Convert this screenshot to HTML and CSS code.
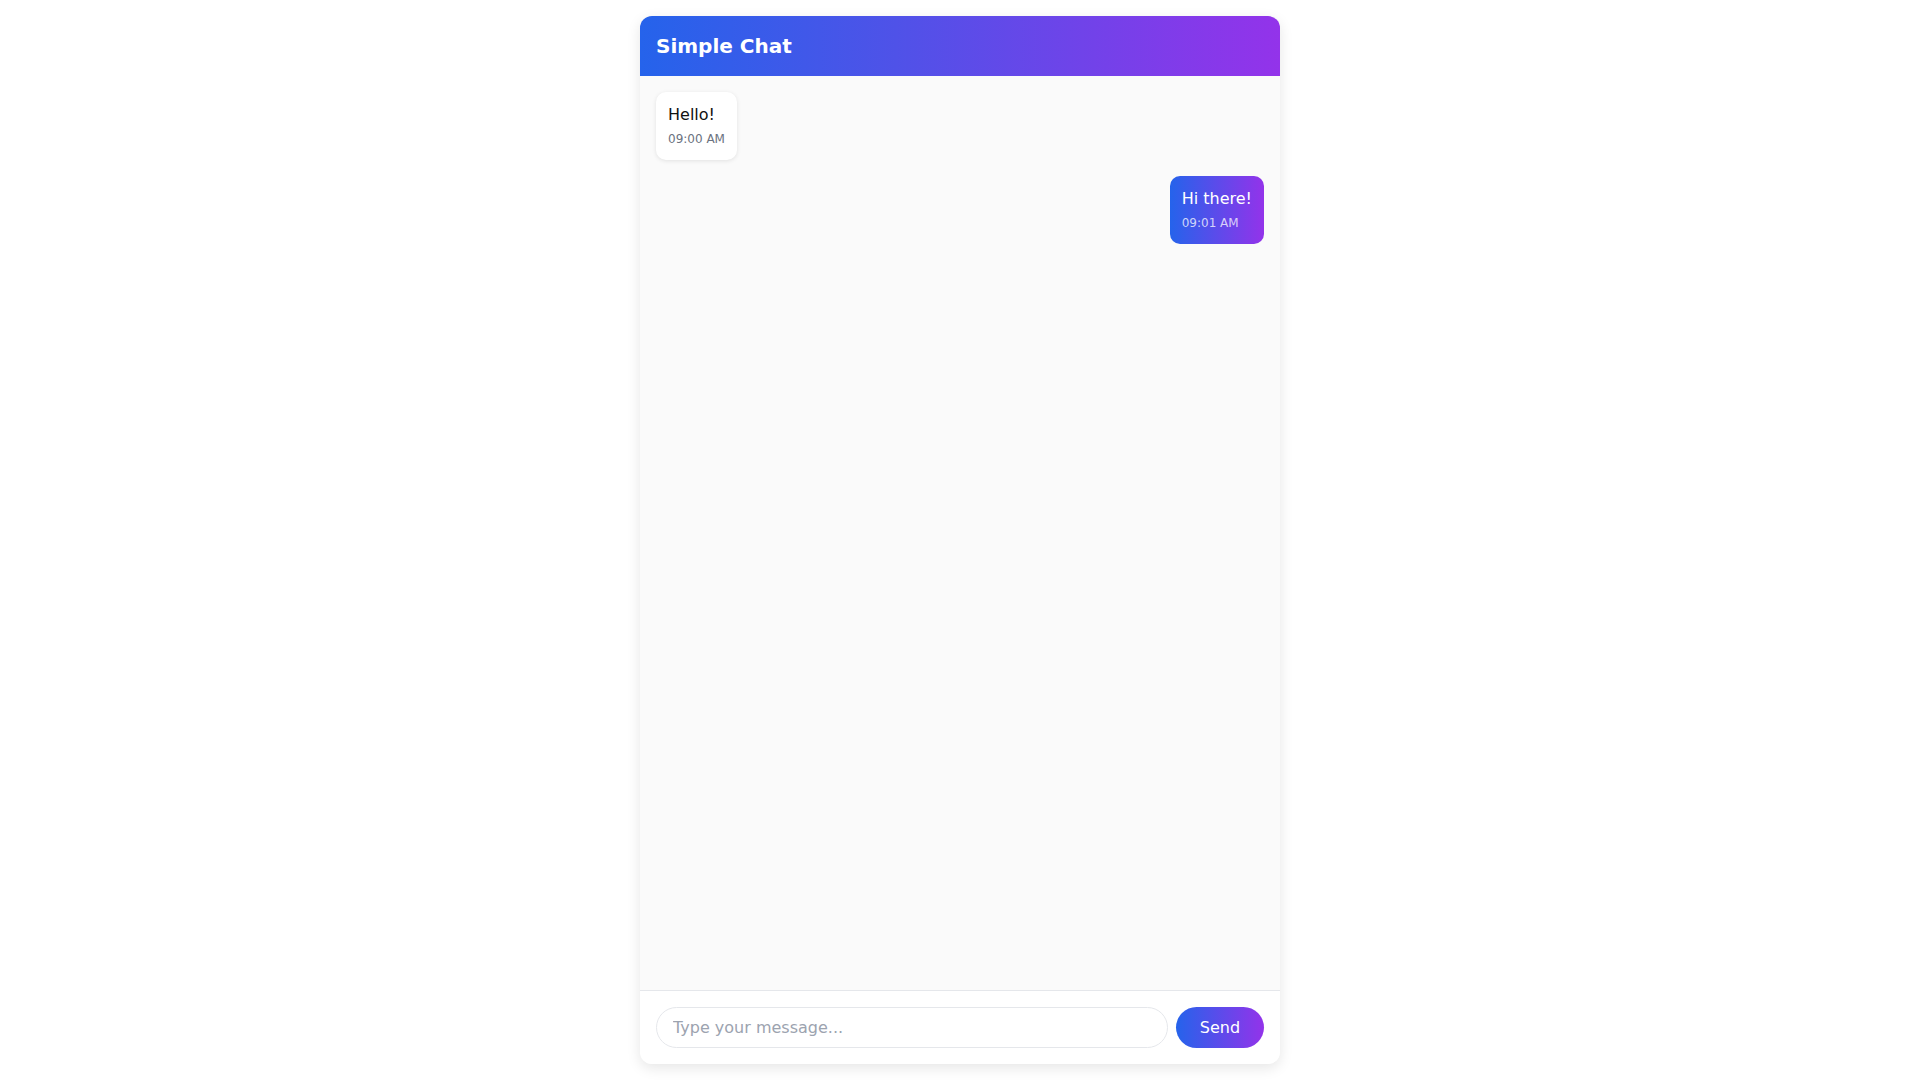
FILE: index.html
```
<!DOCTYPE html>
<html lang="en">
<head>
<meta charset="utf-8">
<title>Simple Chat</title>
<link rel="stylesheet" href="styles.css">
</head>
<body>
<div class="chat">
  <header class="chat-header">Simple Chat</header>
  <main class="messages">
    <div class="msg received">
      <div class="msg-text">Hello!</div>
      <div class="msg-time">09:00 AM</div>
    </div>
    <div class="msg sent">
      <div class="msg-text">Hi there!</div>
      <div class="msg-time">09:01 AM</div>
    </div>
  </main>
  <form class="composer">
    <input class="composer-input" type="text" placeholder="Type your message...">
    <button class="composer-send" type="button">Send</button>
  </form>
</div>
</body>
</html>
```
FILE: styles.css
```
* { box-sizing: border-box; }
html, body { margin: 0; height: 100%; }
body {
  background: #ffffff;
  font-family: "DejaVu Sans", sans-serif;
  padding: 16px 0;
}
.chat {
  width: 640px;
  height: 1048px;
  margin: 0 auto;
  display: flex;
  flex-direction: column;
  border-radius: 12px;
  overflow: hidden;
  background: #fafafa;
  box-shadow: 0 4px 14px rgba(0,0,0,0.10);
}
.chat-header {
  height: 60px;
  flex: none;
  display: flex;
  align-items: center;
  padding: 0 16px;
  color: #ffffff;
  font-weight: bold;
  font-size: 20px;
  background: linear-gradient(90deg, #2563eb 0%, #4f52e8 40%, #9333ea 100%);
}
.messages {
  flex: 1;
  display: flex;
  flex-direction: column;
  align-items: flex-start;
  gap: 16px;
  padding: 16px;
  background: #fafafa;
}
.msg {
  padding: 12px;
  border-radius: 10px;
  font-size: 16px;
}
.msg-text { line-height: 22px; }
.msg-time { font-size: 12px; line-height: 18px; margin-top: 4px; }
.received {
  background: #ffffff;
  color: #111111;
  box-shadow: 0 1px 4px rgba(0,0,0,0.10);
}
.received .msg-time { color: #6b7280; }
.sent {
  align-self: flex-end;
  color: #ffffff;
  background: linear-gradient(90deg, #2563eb, #9333ea);
}
.sent .msg-time { color: rgba(255,255,255,0.75); }
.composer {
  flex: none;
  margin: 0;
  display: flex;
  gap: 8px;
  padding: 16px;
  background: #ffffff;
  border-top: 1px solid #e5e7eb;
}
.composer-input {
  flex: 1;
  height: 41px;
  border: 1px solid #e5e7eb;
  border-radius: 999px;
  padding: 0 16px;
  font-family: "DejaVu Sans", sans-serif;
  font-size: 16px;
  color: #111111;
  outline: none;
  background: #ffffff;
}
.composer-input::placeholder { color: #9ca3af; }
.composer-send {
  height: 41px;
  width: 88px;
  border: none;
  border-radius: 999px;
  color: #ffffff;
  font-family: "DejaVu Sans", sans-serif;
  font-size: 16px;
  background: linear-gradient(90deg, #2563eb, #9333ea);
  cursor: pointer;
}
```
